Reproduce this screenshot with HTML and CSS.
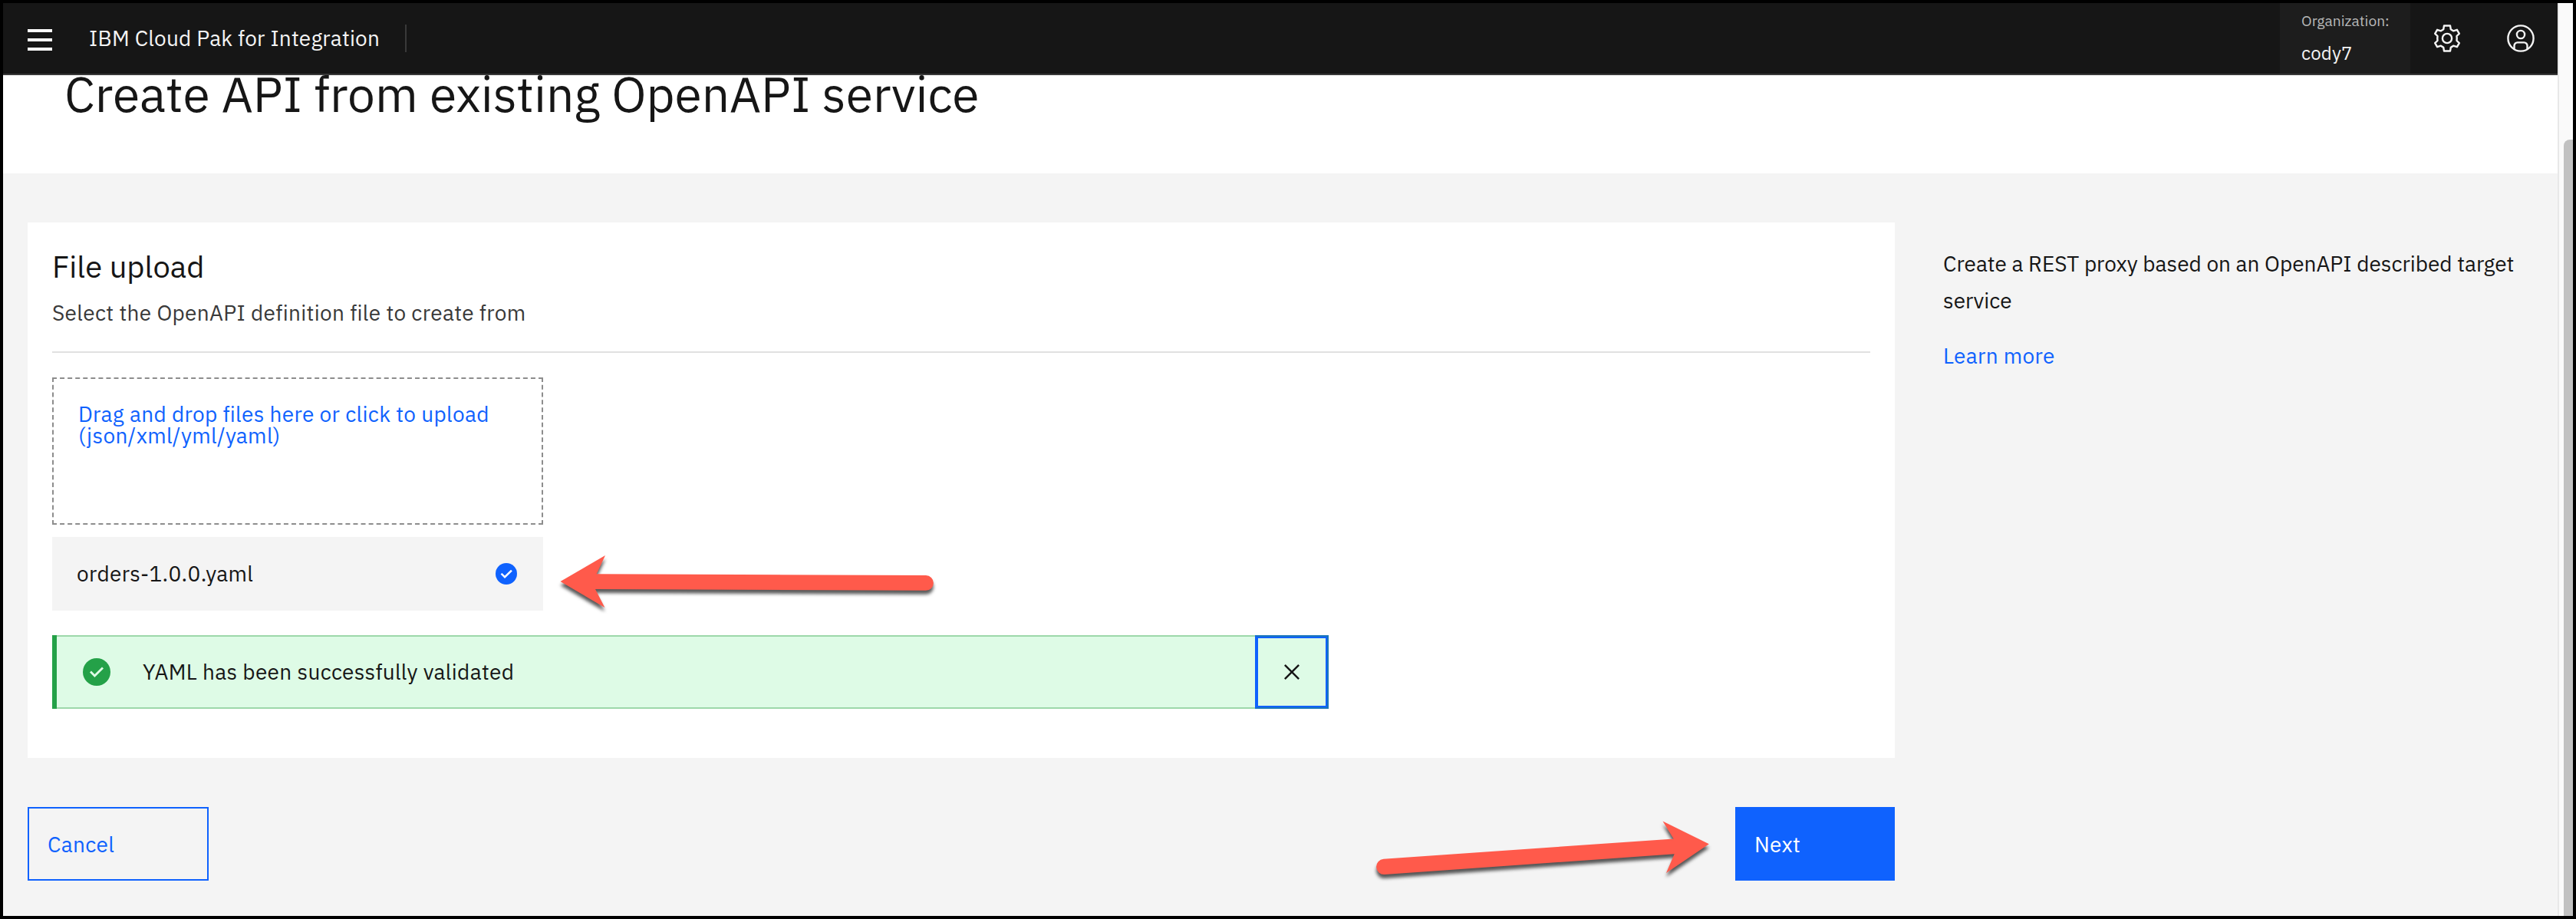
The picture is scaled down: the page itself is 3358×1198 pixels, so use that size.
FILE: index.html
```html
<!DOCTYPE html>
<html lang="en">
<head>
<meta charset="utf-8">
<title>IBM Cloud Pak for Integration</title>
<link rel="stylesheet" href="styles.css">
</head>
<body>
<div class="window">
  <div class="app">
    <header class="header">
      <button class="menu" aria-label="Menu"><span></span><span></span><span></span></button>
      <div class="product">IBM Cloud Pak for Integration</div>
      <div class="divider"></div>
      <div class="org">
        <div class="org-label">Organization:</div>
        <div class="org-name">cody7</div>
      </div>
      <div class="tool">
        <svg width="40" height="40" viewBox="-20 -20 40 40" fill="none" stroke="#f4f4f4" stroke-width="2.4" stroke-linejoin="round">
          <circle r="6.1"/>
          <path d="M-4 -16.5H4L4.8 -11.8Q6.3 -10.9 8.1 -9.7L12.9 -11.2L15.8 -6.1L12.5 -3Q12.9 0 12.5 3L15.8 6.1L12.9 11.2L8.1 9.7Q6.3 10.9 4.8 11.8L4 16.5H-4L-4.8 11.8Q-6.3 10.9 -8.1 9.7L-12.9 11.2L-15.8 6.1L-12.5 3Q-12.9 0 -12.5 -3L-15.8 -6.1L-12.9 -11.2L-8.1 -9.7Q-6.3 -10.9 -4.8 -11.8Z"/>
        </svg>
      </div>
      <div class="tool">
        <svg width="40" height="40" viewBox="-20 -20 40 40" fill="none" stroke="#f4f4f4" stroke-width="2.4">
          <circle r="16.6"/>
          <circle cy="-5" r="5.1"/>
          <path d="M-8.5 14V9.6A4.2 4.2 0 0 1 -4.3 5.4H4.3A4.2 4.2 0 0 1 8.5 9.6V14"/>
        </svg>
      </div>
    </header>
    <div class="hero"><h1>Create API from existing OpenAPI service</h1></div>
    <main class="main">
      <div class="column">
        <section class="card">
          <h2>File upload</h2>
          <p class="subtitle">Select the OpenAPI definition file to create from</p>
          <hr>
          <div class="dropzone">Drag and drop files here or click to upload<br>(json/xml/yml/yaml)</div>
          <div class="file">
            <span>orders-1.0.0.yaml</span>
            <svg width="32" height="32" viewBox="0 0 16 16"><circle cx="8" cy="8" r="7" fill="#0f62fe"/><path fill="#fff" d="M7 11L4.3 8.3l.9-.8L7 9.3l4-3.9.9.8z"/></svg>
          </div>
          <div class="notice">
            <svg width="40" height="40" viewBox="0 0 20 20"><circle cx="10" cy="10" r="9" fill="#24a148"/><path fill="#defbe6" d="M8.7 13.5l-3.2-3.2 1-1 2.2 2.2 4.8-4.8 1 1z"/></svg>
            <span>YAML has been successfully validated</span>
            <button class="close" aria-label="Close">
              <svg width="40" height="40" viewBox="0 0 32 32"><path fill="#161616" d="M24 9.4L22.6 8 16 14.6 9.4 8 8 9.4l6.6 6.6L8 22.6 9.4 24l6.6-6.6 6.6 6.6 1.4-1.4-6.6-6.6z"/></svg>
            </button>
          </div>
        </section>
        <div class="actions">
          <button class="btn cancel">Cancel</button>
          <button class="btn next">Next</button>
        </div>
      </div>
      <aside class="help">
        <p>Create a REST proxy based on an OpenAPI described target service</p>
        <a>Learn more</a>
      </aside>
    </main>
  </div>
  <div class="scrollbar"><div class="thumb"></div></div>
</div>
<svg class="arrows" width="3358" height="1198" viewBox="0 0 3358 1198" fill="#ff5a4b">
  <path d="M730.5 758L789 724L777.6 748.2L1207 750A9.9 9.9 0 0 1 1207 769.8L776 768L788.4 792Z"/>
  <path d="M2227.8 1100.3L2167.5 1070.4L2181.7 1093.4L1803.6 1119.8A10.1 10.1 0 0 0 1804.8 1140L2182.7 1113.3L2172 1138Z"/>
</svg>
</body>
</html>
```
FILE: styles.css
```css
* { box-sizing: border-box; }
body {
  margin: 0;
  width: 3358px;
  height: 1198px;
  overflow: hidden;
  position: relative;
  font-family: "IBM Plex Sans", Roboto, sans-serif;
  font-size: 28px;
  letter-spacing: 0.32px;
  color: #161616;
}
h1, h2, p { margin: 0; font-weight: 400; }
button { font: inherit; letter-spacing: inherit; border: 0; background: none; padding: 0; }
svg { display: block; }

.window {
  height: 1198px;
  border: 4px solid #000;
  display: flex;
}
.app {
  width: 3330px;
  display: flex;
  flex-direction: column;
  background: #f4f4f4;
}

.header {
  height: 94px;
  flex: none;
  display: flex;
  align-items: center;
  background: #161616;
  border-bottom: 2px solid #393939;
  color: #f4f4f4;
}
.menu {
  margin-left: 32px;
  width: 32px;
  display: flex;
  flex-direction: column;
  gap: 8px;
  padding-top: 4px;
}
.menu span { height: 4px; background: #fff; }
.product { margin-left: 48px; width: 412px; line-height: 36px; letter-spacing: 0.2px; }
.divider { width: 2px; height: 36px; background: #393939; }
.org {
  margin-left: auto;
  width: 170px;
  height: 92px;
  padding: 11px 0 0 28px;
  background: #1d1d1d;
}
.org-label { font-size: 19.2px; line-height: 24px; letter-spacing: 0.05px; color: #b8b8b8; }
.org-name { margin-top: 14px; font-size: 24px; line-height: 32px; letter-spacing: 0.2px; }
.tool { width: 96px; display: flex; justify-content: center; }

.hero { height: 128px; flex: none; background: #fff; overflow: hidden; }
.hero h1 { margin-top: -16px; padding-left: 80px; font-size: 64px; line-height: 80px; letter-spacing: 0; }

.main {
  flex: 1;
  padding: 64px 0 0 32px;
  display: grid;
  grid-template-columns: 2434px 770px;
  column-gap: 63px;
  align-content: start;
}
.card { background: #fff; padding: 32px 32px 64px; }
.card h2 { font-size: 40px; line-height: 50px; letter-spacing: 0; }
.subtitle { margin-top: 16px; line-height: 40px; color: #393939; }
.card hr { margin: 30px 0 32px; border: 0; height: 2px; background: #e0e0e0; }
.dropzone {
  width: 640px;
  height: 192px;
  padding: 32px;
  border: 2px dashed #8d8d8d;
  line-height: 28px;
  color: #0f62fe;
}
.file {
  margin-top: 16px;
  width: 640px;
  height: 96px;
  padding: 0 32px;
  display: flex;
  align-items: center;
  justify-content: space-between;
  background: #f4f4f4;
}
.notice {
  margin-top: 32px;
  width: 1664px;
  height: 96px;
  padding-left: 32px;
  display: flex;
  align-items: center;
  gap: 40px;
  background: #defbe6;
  border-left: 6px solid #24a148;
  box-shadow: inset 0 2px #9dd8aa, inset 0 -2px #9dd8aa;
}
.notice span, .file span { line-height: 36px; margin-top: -1px; }
.close {
  margin-left: auto;
  width: 96px;
  height: 96px;
  display: flex;
  align-items: center;
  justify-content: center;
  border: 2px solid #1a76ba;
  border-left-color: #0f62fe;
  box-shadow: inset 0 0 0 2px #0f62fe;
}

.actions { margin-top: 64px; display: flex; justify-content: space-between; }
.btn { height: 96px; text-align: left; }
.cancel { width: 236px; padding-left: 24px; border: 2px solid #0f62fe; color: #0f62fe; }
.next { width: 208px; padding-left: 25px; background: #0f62fe; color: #fff; }

.help { padding-top: 30px; line-height: 48px; letter-spacing: 0; }
.help a { display: block; margin-top: 24px; color: #0f62fe; letter-spacing: 0.32px; }

.scrollbar {
  width: 20px;
  border-left: 2px solid #e8e8e8;
  background: #fafafa;
  padding: 178px 0 0 6px;
}
.thumb { height: 1012px; border-radius: 8px 0 0 0; background: #c1c1c1; }

/* annotation arrows drawn over the page */
.arrows {
  position: absolute;
  left: 0;
  top: 0;
  filter: drop-shadow(0 5px 2px rgba(0, 0, 0, 0.65));
}
```
